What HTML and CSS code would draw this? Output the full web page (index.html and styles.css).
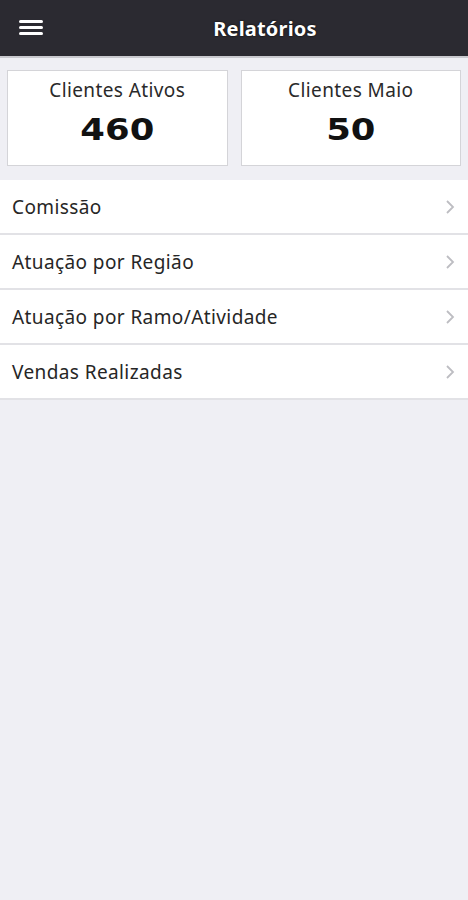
FILE: index.html
```html
<!DOCTYPE html>
<html lang="pt-BR">
<head>
    <meta charset="UTF-8">
    <title>Relatórios</title>
    <link rel="stylesheet" href="styles.css">
</head>
<body>
    <header class="topbar">
        <button class="menu-btn" aria-label="Menu">
            <span></span><span></span><span></span>
        </button>
        <h1>Relatórios</h1>
    </header>

    <section class="summary">
        <div class="card">
            <div class="card-label">Clientes Ativos</div>
            <div class="card-value"><span>460</span></div>
        </div>
        <div class="card">
            <div class="card-label">Clientes Maio</div>
            <div class="card-value"><span>50</span></div>
        </div>
    </section>

    <ul class="report-list">
        <li><span>Comissão</span><svg class="chevron" viewBox="0 0 10 16"><path d="M2 2l6 6-6 6"/></svg></li>
        <li><span>Atuação por Região</span><svg class="chevron" viewBox="0 0 10 16"><path d="M2 2l6 6-6 6"/></svg></li>
        <li><span>Atuação por Ramo/Atividade</span><svg class="chevron" viewBox="0 0 10 16"><path d="M2 2l6 6-6 6"/></svg></li>
        <li><span>Vendas Realizadas</span><svg class="chevron" viewBox="0 0 10 16"><path d="M2 2l6 6-6 6"/></svg></li>
    </ul>
</body>
</html>
```

FILE: styles.css
```css
/* General Styles */
body {
  font-family: "Noto Sans", sans-serif;
  background-color: #efeff4;
  margin: 0;
  padding: 0;
  color: #222;
}

/* Top bar */
.topbar {
  position: relative;
  height: 56px;
  background-color: #2b2a31;
  border-bottom: 2px solid #c9c9ce;
  display: flex;
  align-items: center;
  justify-content: center;
}

.topbar h1 {
  margin: 0 0 0 62px;
  color: #ffffff;
  font-size: 20px;
  font-weight: bold;
  letter-spacing: 0.2px;
  text-shadow: 0 0 2px #000;
}

.menu-btn {
  position: absolute;
  left: 19px;
  top: 20px;
  width: 24px;
  padding: 0;
  background: none;
  border: none;
  display: flex;
  flex-direction: column;
  gap: 3px;
}

.menu-btn span {
  display: block;
  height: 3px;
  border-radius: 2px;
  background-color: #ffffff;
}

/* Summary cards */
.summary {
  display: flex;
  gap: 13px;
  padding: 12px 7px 14px 7px;
}

.card {
  flex: 1;
  height: 94px;
  background-color: #ffffff;
  border: 1px solid #d4d4d8;
  text-align: center;
}

.card-label {
  font-size: 19px;
  letter-spacing: 0.4px;
  margin-top: 6px;
  color: #2a2a2a;
}

.card-value {
  font-family: "DejaVu Sans", sans-serif;
  font-size: 30px;
  font-weight: bold;
  line-height: 1.2;
  margin-top: 9px;
  color: #111;
}

.card-value span {
  display: inline-block;
  transform: scaleX(1.18);
}

/* Report list */
.report-list {
  list-style: none;
  margin: 0;
  padding: 0;
  background-color: #ffffff;
}

.report-list li {
  height: 53px;
  display: flex;
  align-items: center;
  justify-content: space-between;
  padding: 0 13px 0 12px;
  border-bottom: 2px solid #e2e2e6;
  font-size: 19px;
  letter-spacing: 0.4px;
  color: #262626;
}

.chevron {
  width: 10px;
  height: 16px;
  fill: none;
  stroke: #bdbdc2;
  stroke-width: 1.8;
}
```
